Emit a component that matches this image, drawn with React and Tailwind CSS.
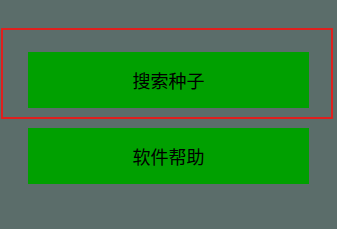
export default function App() {
  return (
    <div className="w-[337px] h-[229px] bg-[#5b6d6a] pt-[28px] pl-[1px] overflow-hidden" style={{ fontFamily: '"Noto Sans CJK SC", "Noto Sans", sans-serif' }}>
      <div className="w-[332px] h-[91px] border-2 border-[#e0201e] pt-[22px] pl-[25px]">
        <div className="w-[281px] h-[56px] bg-[#00a000] flex items-center justify-center text-[18px] text-black">
          搜索种子
        </div>
      </div>
      <div className="mt-[9px] ml-[27px] w-[281px] h-[56px] bg-[#00a000] flex items-center justify-center text-[18px] text-black">
        软件帮助
      </div>
    </div>
  );
}
